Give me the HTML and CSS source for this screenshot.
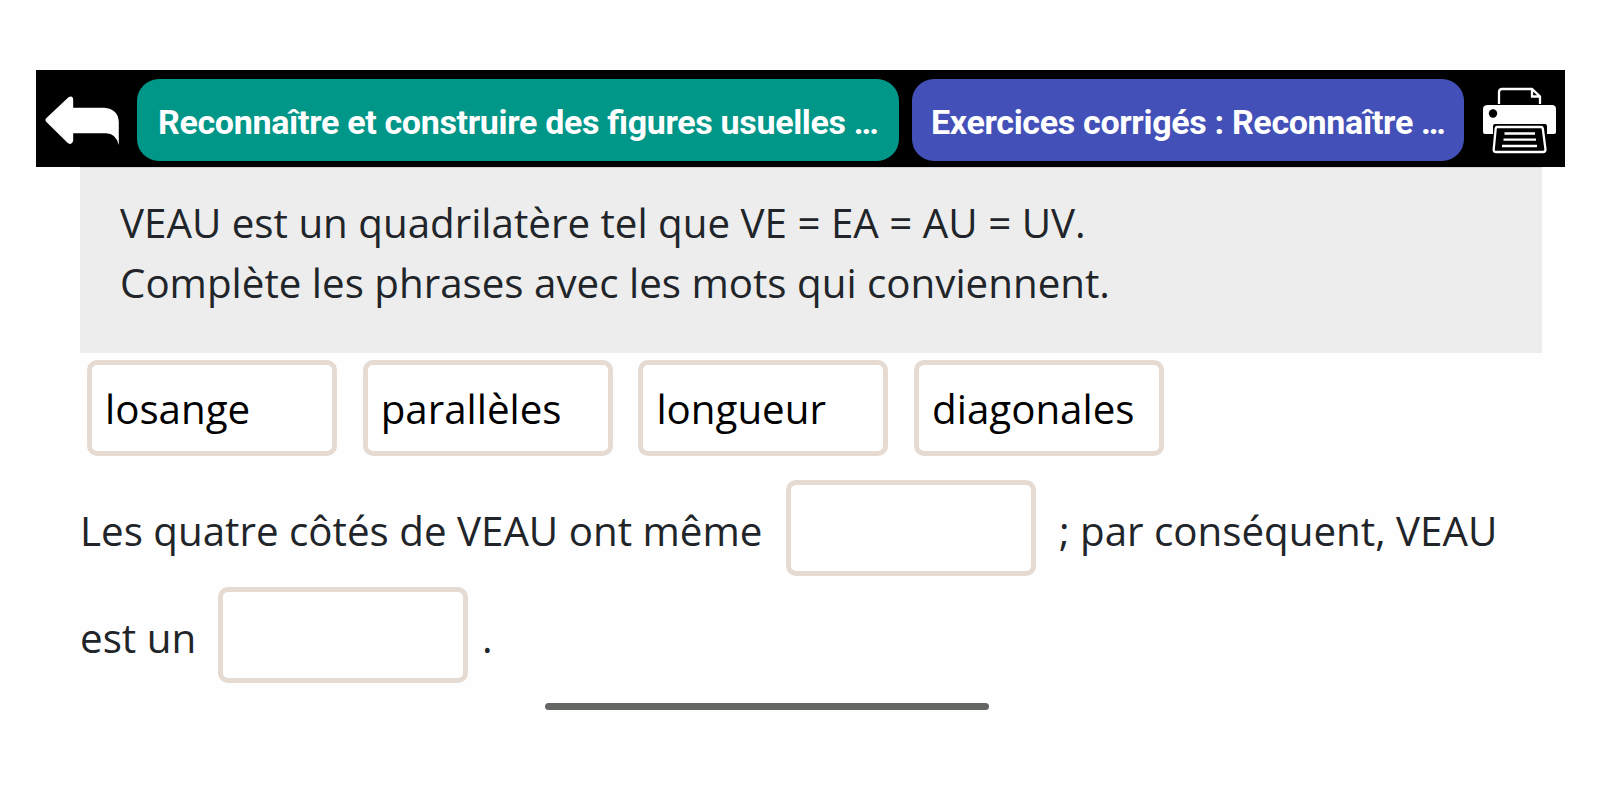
FILE: index.html
```html
<!DOCTYPE html>
<html lang="fr">
<head>
    <meta charset="utf-8">
    <title>Reconnaître et construire des figures usuelles</title>
    <link rel="stylesheet" href="styles.css">
</head>
<body>
    <div class="topbar">
        <svg class="back_icon" viewBox="0 0 76 52">
            <path d="M1.2 22.5 L24 1 Q28.5 -1 28.5 4 V12 H60 Q74 13 75 26 V50 Q72 38 62 38 H28.5 V46 Q27 50.5 23 48 L1.2 26.5 Q-.8 24.5 1.2 22.5 Z" fill="#fff"/>
        </svg>
        <div class="tab tab_lesson">Reconnaître et construire des figures usuelles <span class="dots">...</span></div>
        <div class="tab tab_exercises">Exercices corrigés : Reconnaître <span class="dots">...</span></div>
        <svg class="print_icon" viewBox="0 0 74 68">
            <path d="M16 17 V5 Q16 2 19 2 H49 L57 9.5 V17 M49 2 V9.5 H57" fill="none" stroke="#fff" stroke-width="2.3"/>
            <path d="M5 18 H69 Q73 18 73 22 V45 Q73 47 71 47 H64 V39 Q64 37 62 37 H12 Q10 37 10 39 V47 H2 Q0 47 0 45 V22 Q0 18 5 18 Z" fill="#fff"/>
            <circle cx="10" cy="26.5" r="4.2" fill="#000"/>
            <path d="M14 40 H58 Q59.500 40 59.800 41.500 L62.500 62.500 Q62.500 65 60 65 H13 Q10.500 65 10.700 62.500 L12.700 41.500 Q13 40 14 40 Z" fill="#000" stroke="#fff" stroke-width="2.3"/>
            <path d="M21.500 46.500 H52 M20.500 52.700 H53 M19 59 H54" stroke="#fff" stroke-width="2.3"/>
        </svg>
    </div>

    <div class="exercise">
        <div class="instructions">
            <p>VEAU est un quadrilatère tel que VE = EA = AU = UV.</p>
            <p>Complète les phrases avec les mots qui conviennent.</p>
        </div>

        <div class="words">
            <div class="box">losange</div>
            <div class="box">parallèles</div>
            <div class="box">longueur</div>
            <div class="box">diagonales</div>
        </div>

        <div class="sentence">
            <span class="start">Les quatre côtés de VEAU ont même</span>
            <div class="box"></div>
            <span class="after">; par conséquent, VEAU</span>
        </div>
        <div class="sentence last">
            <span class="start_short">est un</span>
            <div class="box"></div>
            <span class="dot">.</span>
        </div>
    </div>

    <div class="home_bar"></div>
</body>
</html>
```
FILE: styles.css
```css
* {
    box-sizing: border-box;
}
body {
    margin: 0;
    padding-top: 70px;
    height: 800px;
    background-color: #fefefe;
    color: #212529;
    font-family: "Open Sans", sans-serif;
    font-size: 40.31px;
    line-height: 60px;
    white-space: nowrap;
    overflow: hidden;
}


.topbar {
    display: flex;
    align-items: flex-start;
    width: 1529px;
    height: 97px;
    margin-left: 36px;
    padding: 9px 0 0 9px;
    background-color: #000;
}
.back_icon {
    width: 75px;
    height: 51px;
    margin-top: 16.5px;
    margin-right: 17px;
    flex: none;
}
.tab {
    height: 82px;
    padding-left: 21px;
    border-radius: 22px;
    color: #fff;
    font-family: Roboto, sans-serif;
    font-size: 34px;
    font-weight: bold;
    font-feature-settings: "liga" 1;
    letter-spacing: -0.33px;
    line-height: 86px;
    flex: none;
}
.dots {
    letter-spacing: -2.2px;
}
.tab_lesson {
    width: 762px;
    margin-right: 13px;
    background-color: #009688;
}
.tab_exercises {
    width: 552px;
    padding-left: 19px;
    background-color: #4250b7;
}
.print_icon {
    width: 74px;
    height: 68px;
    margin-top: 8px;
    margin-left: 19px;
    flex: none;
}


.exercise {
    width: 1462px;
    margin-left: 80px;
}
.instructions {
    height: 186px;
    padding: 25px 0 0 40px;
    border-top: 1px solid #d5d5d5;
    background-color: #ededed;
}
.instructions p {
    margin: 0;
}

.words {
    display: flex;
    gap: 25.7px;
    margin: 7px 0 0 7px;
}
.box {
    width: 250px;
    height: 96px;
    padding: 14px 0 0 13px;
    border: 5px solid #e5dbd3;
    border-radius: 10px;
    background-color: #fff;
    color: #000;
    flex: none;
}

.sentence {
    display: flex;
    align-items: center;
    height: 96px;
    margin-top: 24px;
}
.sentence span {
    padding-top: 5px;
}
.last {
    margin-top: 11px;
}
.start {
    width: 706px;
}
.start_short {
    width: 138px;
}
.after {
    margin-left: 23px;
}
.dot {
    margin-left: 14px;
}


.home_bar {
    width: 444px;
    height: 7px;
    margin: 20px 0 0 545px;
    border-radius: 4px;
    background-color: #646664;
}
```
